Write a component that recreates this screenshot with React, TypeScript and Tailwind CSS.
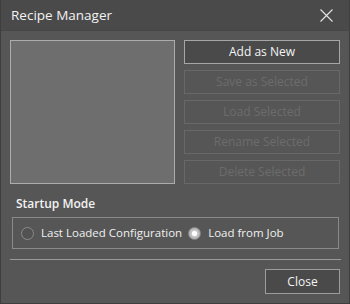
const buttons = [
  { label: "Add as New", enabled: true },
  { label: "Save as Selected", enabled: false },
  { label: "Load Selected", enabled: false },
  { label: "Rename Selected", enabled: false },
  { label: "Delete Selected", enabled: false },
];

function Radio({ checked, label }: { checked?: boolean; label: string }) {
  return (
    <label className="flex items-center gap-[7px]">
      {checked ? (
        <span className="w-[13px] h-[13px] rounded-full bg-[radial-gradient(circle,#ffffff_0%,#ffffff_28%,#c8c8c8_40%,#9a9a9a_100%)] border border-[#8a8a8a]" />
      ) : (
        <span className="w-[13px] h-[13px] rounded-full border border-[#8c8c8c] bg-[#525252]" />
      )}
      <span>{label}</span>
    </label>
  );
}

export default function App() {
  return (
    <div
      className="w-[350px] h-[304px] bg-[#565656] border-x border-b border-[#3e3e3e] flex flex-col text-[11.5px] text-[#f0f0f0]"
      style={{ fontFamily: '"Open Sans", "Noto Sans", sans-serif' }}
    >
      {/* title bar */}
      <div className="h-[31px] bg-[#4a4a4a] border-b border-[#474747] flex items-center justify-between pl-[10px] pr-[15px] shrink-0">
        <span className="text-[13.5px] text-[#f2f2f2]">Recipe Manager</span>
        <svg width="13" height="13" viewBox="0 0 13 13" className="mr-[1px]">
          <path d="M0.5 0.5 L12.5 12.5 M12.5 0.5 L0.5 12.5" stroke="#e4e4e4" strokeWidth="1.1" />
        </svg>
      </div>

      <div className="flex flex-col px-[9px] pt-[9px]">
        <div className="flex gap-[9px]">
          <div className="w-[165px] h-[144px] bg-[#6e6e6e] border border-[#acacac]" />
          <div className="flex flex-col gap-[6px] w-[156px]">
            {buttons.map((b) => (
              <button
                key={b.label}
                className={
                  b.enabled
                    ? "h-[24px] bg-[#4a4a4a] border border-[#a6a6a6] text-[#f4f4f4] text-[12px]"
                    : "h-[24px] bg-[#565656] border border-[#686868] text-[#6c6c6c] text-[12px]"
                }
              >
                {b.label}
              </button>
            ))}
          </div>
        </div>

        <div className="mt-[12px] pl-[6px] font-semibold text-[12px] leading-[16px] text-[#f2f2f2]">
          Startup Mode
        </div>
        <div className="mt-[5px] ml-[2px] mr-[1px] h-[32px] border border-[#8a8a8a] flex items-center pl-[8px] gap-[6px]">
          <Radio label="Last Loaded Configuration" />
          <Radio checked label="Load from Job" />
        </div>

        <div className="mt-[10px] h-px bg-[#9a9a9a] w-[331px]" />

        <div className="mt-[9px] flex justify-end">
          <button className="w-[75px] h-[25px] bg-[#4a4a4a] border border-[#9c9c9c] text-[#f4f4f4] text-[12px]">
            Close
          </button>
        </div>
      </div>
    </div>
  );
}
